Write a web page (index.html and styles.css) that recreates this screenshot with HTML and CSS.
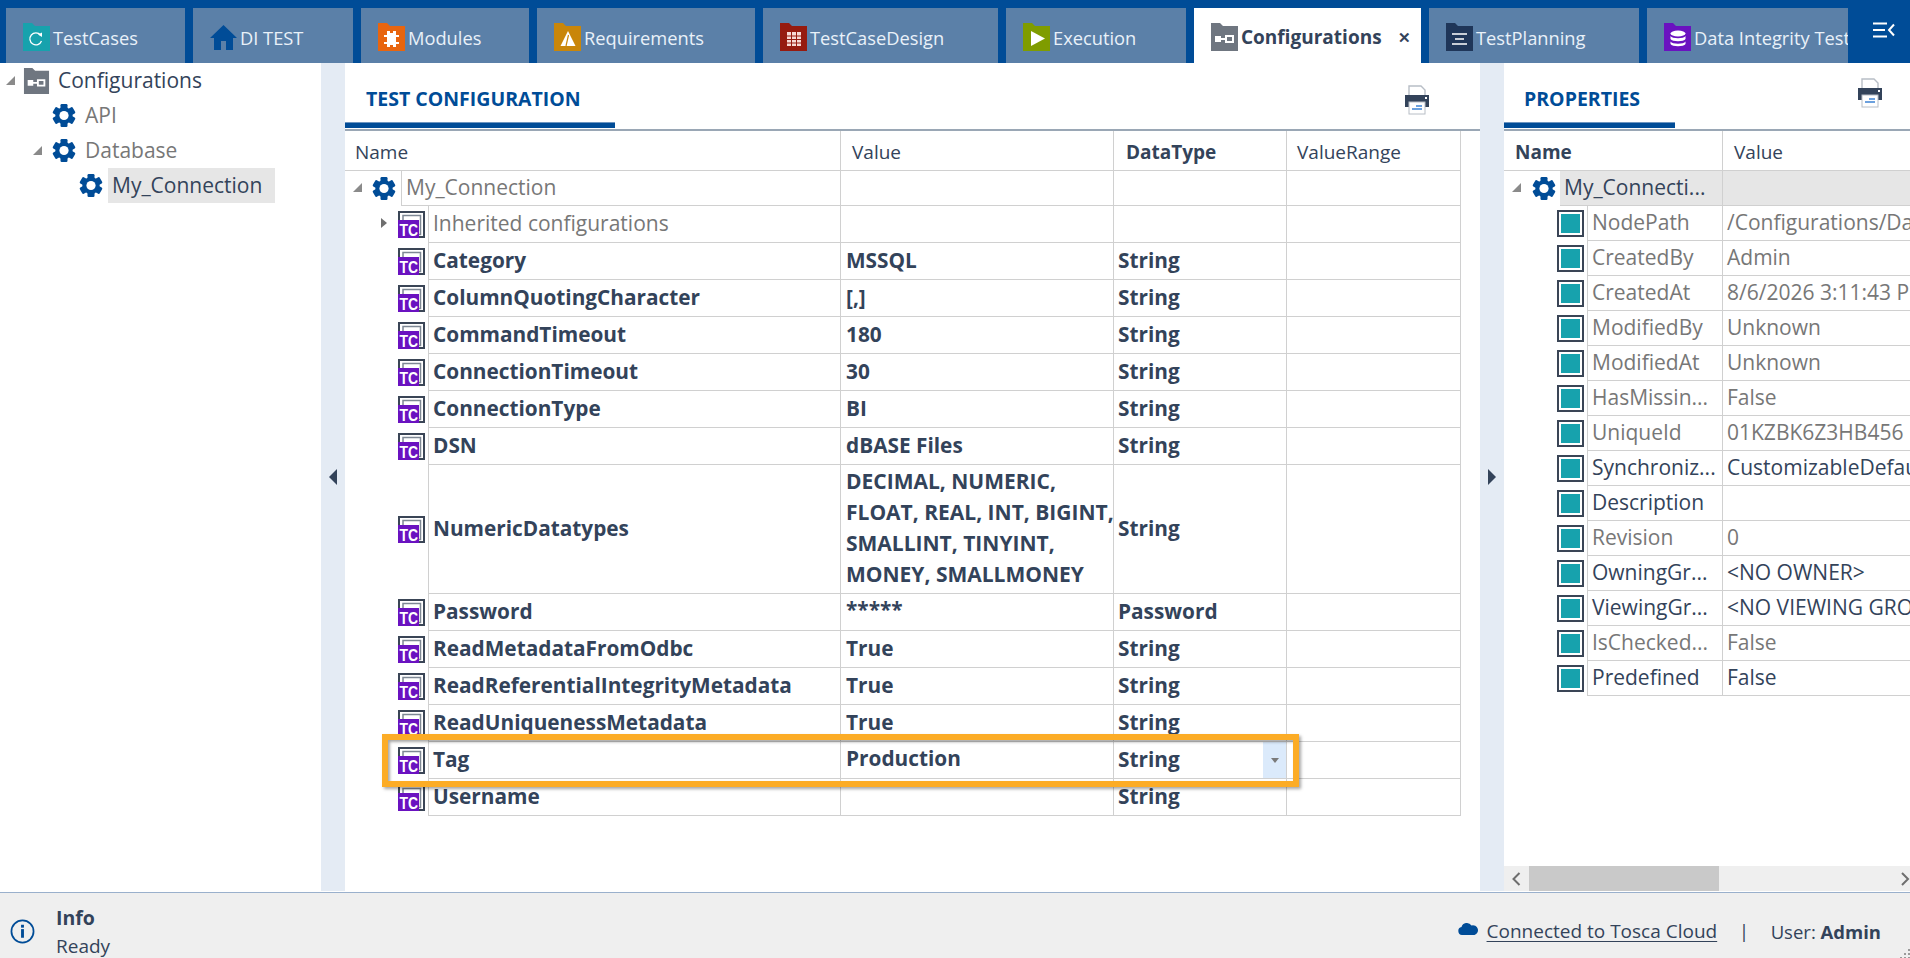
FILE: index.html
```html
<!DOCTYPE html>
<html lang="en">
<head>
<meta charset="utf-8">
<title>Tosca Configurations</title>
<link rel="stylesheet" href="styles.css">
</head>
<body>
<svg class="defs" width="0" height="0" aria-hidden="true">
  <defs>
    <symbol id="gear" viewBox="0 0 24 24">
      <g fill="#004c97">
        <rect x="8.5" y="0.5" width="7" height="23" rx="1.2"/>
        <rect x="8.5" y="0.5" width="7" height="23" rx="1.2" transform="rotate(60 12 12)"/>
        <rect x="8.5" y="0.5" width="7" height="23" rx="1.2" transform="rotate(120 12 12)"/>
        <circle cx="12" cy="12" r="8.6"/>
      </g>
      <circle cx="12" cy="12" r="4.6" fill="#fff"/>
    </symbol>
    <symbol id="tc" viewBox="0 0 27 27">
      <path d="M1 9V1H26V26H21" fill="none" stroke="#3a4556" stroke-width="2"/>
      <path d="M5 9V4.500H22.500V23.500H21" fill="none" stroke="#7d8794" stroke-width="1.500"/>
      <rect x="0" y="9" width="21" height="18" fill="#6a12c0"/>
      <text x="1.500" y="24.500" textLength="18.500" lengthAdjust="spacingAndGlyphs" class="tc-text">TC</text>
    </symbol>
    <symbol id="prop" viewBox="0 0 27 27">
      <rect x="1" y="1" width="25" height="25" fill="#fff" stroke="#3a4556" stroke-width="2"/>
      <rect x="4" y="4" width="19" height="19" fill="#17a2ad"/>
    </symbol>
    <symbol id="folder" viewBox="0 0 27 28">
      <path d="M0 0H9L12 3H27V28H0Z" fill="currentColor"/>
    </symbol>
    <symbol id="print" viewBox="0 0 26 30">
      <path d="M5 10V1H17L21 5V10" fill="#fff" stroke="#b8bec6" stroke-width="1.4"/>
      <path d="M1 10H25V22H1Z" fill="#33435a"/>
      <rect x="21" y="12" width="2" height="2" fill="#fff"/>
      <rect x="5" y="17" width="16" height="12" fill="#fff" stroke="#b8bec6"/>
      <path d="M12 21H18M8 24H18" stroke="#3d83d4" stroke-width="1.6"/>
    </symbol>
  </defs>
</svg>

<header class="topbar">
  <nav class="tabs">
    <div class="tab"><svg class="ti teal"><use href="#folder"/></svg><svg class="glyph" viewBox="0 0 27 28"><path d="M17.500 12A6 6 0 1 0 18.500 18" fill="none" stroke="#fff" stroke-width="1.300"/><path d="M15 11.500L19 9.500V14Z" fill="#fff"/></svg><span>TestCases</span></div>
    <div class="tab"><svg class="ti" viewBox="0 0 27 28"><path d="M13.500 2L0 15H4V27H11V18H16V27H23V15H27Z" fill="#004c97"/></svg><span>DI TEST</span></div>
    <div class="tab"><svg class="ti orange"><use href="#folder"/></svg><svg class="glyph" viewBox="0 0 27 28"><path d="M9 8H12V10H15V8H18V12H21V14H18V19H21V21H18V24H15V22H12V24H9V21H6V19H9V14H6V12H9Z" fill="#fff"/></svg><span>Modules</span></div>
    <div class="tab"><svg class="ti amber"><use href="#folder"/></svg><svg class="glyph" viewBox="0 0 27 28"><path d="M14 8L21.500 23H6.500Z" fill="#fff"/><path d="M14.500 12L12 23" stroke="#c9860a" stroke-width="1.200"/></svg><span>Requirements</span></div>
    <div class="tab"><svg class="ti red"><use href="#folder"/></svg><svg class="glyph" viewBox="0 0 27 28"><path d="M7 9H21V23H7Z" fill="#f6d9d4"/><path d="M7 13H21M7 16.500H21M7 20H21M11.500 9V23M16.500 9V23" stroke="#961b0f"/></svg><span>TestCaseDesign</span></div>
    <div class="tab"><svg class="ti olive"><use href="#folder"/></svg><svg class="glyph" viewBox="0 0 27 28"><path d="M8 8L22 15.500L8 23Z" fill="#fff"/></svg><span>Execution</span></div>
    <div class="tab active"><svg class="ti slate"><use href="#folder"/></svg><svg class="glyph" viewBox="0 0 27 28"><path d="M4 13H10V15H14V12H23V20H14V17H10V19H4Z" fill="#fff"/><rect x="16" y="14" width="5" height="4" fill="#6f7680"/></svg><span>Configurations</span><b class="close">✕</b></div>
    <div class="tab"><svg class="ti navy"><use href="#folder"/></svg><svg class="glyph" viewBox="0 0 27 28"><path d="M6 11H21M9 16H18M6 21H21" stroke="#fff" stroke-width="1.600"/></svg><span>TestPlanning</span></div>
    <div class="tab"><svg class="ti purple"><use href="#folder"/></svg><svg class="glyph" viewBox="0 0 27 28"><ellipse cx="14" cy="10.500" rx="7.500" ry="3" fill="#fff"/><path d="M6.500 13C8 16 20 16 21.500 13V16C20 19 8 19 6.500 16ZM6.500 18.500C8 21.500 20 21.500 21.500 18.500V21C20 24 8 24 6.500 21Z" fill="#fff"/></svg><span>Data Integrity Tests</span></div>
  </nav>
  <svg class="menu-ico" viewBox="0 0 22 16"><path d="M0 1.500H14M0 8H12M0 14.500H14M21 2.500L16 8L21 13.500" fill="none" stroke="#fff" stroke-width="2"/></svg>
</header>

<main class="main">
  <aside class="tree">
    <div class="tnode"><i class="arrow"></i><svg class="ti slate tree-folder"><use href="#folder"/></svg><svg class="glyph tree-glyph" viewBox="0 0 27 28"><path d="M4 13H10V15H14V12H23V20H14V17H10V19H4Z" fill="#fff"/><rect x="16" y="14" width="5" height="4" fill="#6f7680"/></svg><span class="dark">Configurations</span></div>
    <div class="tnode lvl1"><svg class="gear"><use href="#gear"/></svg><span class="grey">API</span></div>
    <div class="tnode lvl1 open"><i class="arrow"></i><svg class="gear"><use href="#gear"/></svg><span class="grey">Database</span></div>
    <div class="tnode lvl2"><svg class="gear"><use href="#gear"/></svg><span class="dark selected">My_Connection</span></div>
  </aside>

  <div class="splitter"><i class="tri tri-left"></i></div>

  <section class="panel center">
    <div class="phead">
      <h2 class="ptitle wide">TEST CONFIGURATION</h2>
      <svg class="print"><use href="#print"/></svg>
    </div>
    <div class="grid">
      <div class="row hdr">
        <div class="c name"><span>Name</span></div>
        <div class="c val"><span>Value</span></div>
        <div class="c dtype"><b>DataType</b></div>
        <div class="c range"><span>ValueRange</span></div>
      </div>
      <div class="row first">
        <div class="lead rootlead"><i class="arrow"></i><svg class="gear"><use href="#gear"/></svg></div>
        <div class="c rootname grey">My_Connection</div>
        <div class="c val"></div><div class="c dtype"></div><div class="c range"></div>
      </div>
      <div class="row">
        <div class="lead"><i class="arrow closed"></i><svg class="tc"><use href="#tc"/></svg></div>
        <div class="c nm grey">Inherited configurations</div>
        <div class="c val"></div><div class="c dtype"></div><div class="c range"></div>
      </div>
      <div class="row strong"><div class="lead"><svg class="tc"><use href="#tc"/></svg></div><div class="c nm">Category</div><div class="c val">MSSQL</div><div class="c dtype">String</div><div class="c range"></div></div>
      <div class="row strong"><div class="lead"><svg class="tc"><use href="#tc"/></svg></div><div class="c nm">ColumnQuotingCharacter</div><div class="c val">[,]</div><div class="c dtype">String</div><div class="c range"></div></div>
      <div class="row strong"><div class="lead"><svg class="tc"><use href="#tc"/></svg></div><div class="c nm">CommandTimeout</div><div class="c val">180</div><div class="c dtype">String</div><div class="c range"></div></div>
      <div class="row strong"><div class="lead"><svg class="tc"><use href="#tc"/></svg></div><div class="c nm">ConnectionTimeout</div><div class="c val">30</div><div class="c dtype">String</div><div class="c range"></div></div>
      <div class="row strong"><div class="lead"><svg class="tc"><use href="#tc"/></svg></div><div class="c nm">ConnectionType</div><div class="c val">BI</div><div class="c dtype">String</div><div class="c range"></div></div>
      <div class="row strong"><div class="lead"><svg class="tc"><use href="#tc"/></svg></div><div class="c nm">DSN</div><div class="c val">dBASE Files</div><div class="c dtype">String</div><div class="c range"></div></div>
      <div class="row strong tall"><div class="lead"><svg class="tc"><use href="#tc"/></svg></div><div class="c nm">NumericDatatypes</div><div class="c val"><span class="lines">DECIMAL, NUMERIC,<br>FLOAT, REAL, INT, BIGINT,<br>SMALLINT, TINYINT,<br>MONEY, SMALLMONEY</span></div><div class="c dtype">String</div><div class="c range"></div></div>
      <div class="row strong"><div class="lead"><svg class="tc"><use href="#tc"/></svg></div><div class="c nm">Password</div><div class="c val stars">*****</div><div class="c dtype">Password</div><div class="c range"></div></div>
      <div class="row strong"><div class="lead"><svg class="tc"><use href="#tc"/></svg></div><div class="c nm">ReadMetadataFromOdbc</div><div class="c val">True</div><div class="c dtype">String</div><div class="c range"></div></div>
      <div class="row strong"><div class="lead"><svg class="tc"><use href="#tc"/></svg></div><div class="c nm">ReadReferentialIntegrityMetadata</div><div class="c val">True</div><div class="c dtype">String</div><div class="c range"></div></div>
      <div class="row strong"><div class="lead"><svg class="tc"><use href="#tc"/></svg></div><div class="c nm">ReadUniquenessMetadata</div><div class="c val">True</div><div class="c dtype">String</div><div class="c range"></div></div>
      <div class="row strong"><div class="lead"><svg class="tc"><use href="#tc"/></svg></div><div class="c nm">Tag</div><div class="c val raised">Production</div><div class="c dtype">String<span class="dd"><i></i></span></div><div class="c range"></div></div>
      <div class="row strong"><div class="lead"><svg class="tc"><use href="#tc"/></svg></div><div class="c nm">Username</div><div class="c val"></div><div class="c dtype">String</div><div class="c range"></div></div>
    </div>
    <div class="callout"></div>
  </section>

  <div class="splitter"><i class="tri tri-right"></i></div>

  <section class="panel props">
    <div class="phead">
      <h2 class="ptitle narrow">PROPERTIES</h2>
      <svg class="print print-up"><use href="#print"/></svg>
    </div>
    <div class="pgrid">
      <div class="prow phdr"><div class="pc pname"><b>Name</b></div><div class="pc pval">Value</div></div>
      <div class="prow proot"><div class="plead rootp"><i class="arrow"></i><svg class="gear"><use href="#gear"/></svg></div><div class="pc rootc">My_Connecti...</div><div class="pc pval shade"></div></div>
      <div class="prow"><div class="plead"><svg class="tc"><use href="#prop"/></svg></div><div class="pc pn grey">NodePath</div><div class="pc pval grey">/Configurations/Database/My_Connection</div></div>
      <div class="prow"><div class="plead"><svg class="tc"><use href="#prop"/></svg></div><div class="pc pn grey">CreatedBy</div><div class="pc pval grey">Admin</div></div>
      <div class="prow"><div class="plead"><svg class="tc"><use href="#prop"/></svg></div><div class="pc pn grey">CreatedAt</div><div class="pc pval grey">8/6/2026 3:11:43 PM</div></div>
      <div class="prow"><div class="plead"><svg class="tc"><use href="#prop"/></svg></div><div class="pc pn grey">ModifiedBy</div><div class="pc pval grey">Unknown</div></div>
      <div class="prow"><div class="plead"><svg class="tc"><use href="#prop"/></svg></div><div class="pc pn grey">ModifiedAt</div><div class="pc pval grey">Unknown</div></div>
      <div class="prow"><div class="plead"><svg class="tc"><use href="#prop"/></svg></div><div class="pc pn grey">HasMissin...</div><div class="pc pval grey">False</div></div>
      <div class="prow"><div class="plead"><svg class="tc"><use href="#prop"/></svg></div><div class="pc pn grey">UniqueId</div><div class="pc pval grey">01KZBK6Z3HB456</div></div>
      <div class="prow"><div class="plead"><svg class="tc"><use href="#prop"/></svg></div><div class="pc pn dark">Synchroniz...</div><div class="pc pval dark">CustomizableDefault</div></div>
      <div class="prow"><div class="plead"><svg class="tc"><use href="#prop"/></svg></div><div class="pc pn dark">Description</div><div class="pc pval"></div></div>
      <div class="prow"><div class="plead"><svg class="tc"><use href="#prop"/></svg></div><div class="pc pn grey">Revision</div><div class="pc pval grey">0</div></div>
      <div class="prow"><div class="plead"><svg class="tc"><use href="#prop"/></svg></div><div class="pc pn dark">OwningGr...</div><div class="pc pval dark">&lt;NO OWNER&gt;</div></div>
      <div class="prow"><div class="plead"><svg class="tc"><use href="#prop"/></svg></div><div class="pc pn dark">ViewingGr...</div><div class="pc pval dark">&lt;NO VIEWING GROUP&gt;</div></div>
      <div class="prow"><div class="plead"><svg class="tc"><use href="#prop"/></svg></div><div class="pc pn grey">IsChecked...</div><div class="pc pval grey">False</div></div>
      <div class="prow"><div class="plead"><svg class="tc"><use href="#prop"/></svg></div><div class="pc pn dark">Predefined</div><div class="pc pval dark">False</div></div>
    </div>
    <div class="hscroll">
      <svg class="sarrow" viewBox="0 0 10 14"><path d="M8 1L2 7L8 13" fill="none" stroke="#6e6e6e" stroke-width="2"/></svg>
      <div class="thumb"></div>
      <svg class="sarrow sarrow-r" viewBox="0 0 10 14"><path d="M2 1L8 7L2 13" fill="none" stroke="#6e6e6e" stroke-width="2"/></svg>
    </div>
  </section>
</main>

<footer class="status">
  <svg class="info-ico" viewBox="0 0 26 26"><circle cx="13" cy="13" r="11.500" fill="none" stroke="#004c97" stroke-width="1.800"/><rect x="11.500" y="10.500" width="3" height="9" fill="#004c97"/><rect x="11.500" y="6" width="3" height="3" fill="#004c97"/></svg>
  <div class="msg"><b>Info</b><span>Ready</span></div>
  <div class="conn">
    <svg class="cloud" viewBox="0 0 20 13"><path d="M4 13A4 4 0 0 1 3.500 5.100A5.500 5.500 0 0 1 13.500 3.500A4.800 4.800 0 0 1 16.500 13Z" fill="#004c97"/></svg>
    <a class="link">Connected to Tosca Cloud</a>
    <span class="sep">|</span>
    <span class="user">User: <b>Admin</b></span>
  </div>
  <svg class="grip" viewBox="0 0 10 10"><path d="M8 1h2v2H8zM4 5h2v2H4zM8 5h2v2H8zM0 9h2v1H0zM4 9h2v1H4zM8 9h2v1H8z" fill="#9a9a9a"/></svg>
</footer>
</body>
</html>
```

FILE: styles.css
```css
* { box-sizing: border-box; }
html, body { margin: 0; padding: 0; }
body {
  width: 1910px; height: 958px; overflow: hidden; display: flex; flex-direction: column;
  background: #fff; color: #33435a;
  font-family: "Open Sans", "Noto Sans", sans-serif; font-size: 21px;
}
.defs { position: absolute; }
.tc-text { font: bold 17px "Liberation Sans", sans-serif; fill: #fff; }

.dark { color: #33435a; }
.grey { color: #777; }

/* Top tabs */
.topbar { height: 63px; flex: none; background: #004c97; display: flex; padding: 8px 0 0 6px; position: relative; }
.tabs {
  width: 1842px; overflow: hidden; display: grid; gap: 8px;
  grid-template-columns: 179px 160px 168px 218px 235px 180px 227px 210px 201px;
}
.tab {
  background: #5b80a8; color: #e9f1f9; display: flex; align-items: center; padding: 3px 0 0 17px;
  position: relative; white-space: nowrap; overflow: hidden; font-size: 18.3px;
}
.tab.active { background: #fff; color: #33435a; font-weight: 700; font-size: 19px; padding-top: 3px; }
.tab span { margin-left: 3px; }
.ti { width: 27px; height: 28px; flex: none; }
.glyph { width: 27px; height: 28px; flex: none; margin-left: -27px; }
.teal { color: #17a2ad; } .orange { color: #e8650f; } .amber { color: #c9860a; }
.red { color: #961b0f; } .olive { color: #7f9c00; } .slate { color: #6f7680; }
.navy { color: #1f3659; } .purple { color: #6a12c0; }
.close { margin-left: auto; margin-right: 10px; font-size: 15px; color: #33435a; }
.menu-ico { width: 22px; height: 16px; margin: 14px 0 0 25px; }

/* Main */
.main { flex: none; height: 829px; display: flex; padding-bottom: 1px; }
.tree { width: 321px; flex: none; }
.tnode { height: 35px; display: flex; align-items: center; padding-left: 6px; position: relative; white-space: nowrap; }
.tnode .tree-folder { margin-left: 8px; }
.tnode > span { margin-left: 8px; padding-bottom: 2px; }
.tree-folder { width: 27px; height: 26px; }
.tree-glyph { height: 26px; }
.lvl1 { padding-left: 52px; }
.lvl1.open { padding-left: 33px; }
.lvl1.open .gear { margin-left: 10px; }
.lvl1 > span { margin-left: 9px; }
.lvl2 { padding-left: 79px; }
.lvl2 > span { margin-left: 5px; }
.selected { background: #e6e6e6; height: 35px; width: 167px; padding-left: 4px; line-height: 35px; }
.gear { width: 24px; height: 25px; flex: none; }
.arrow { width: 0; height: 0; flex: none; display: block; border-style: solid; border-width: 0 0 9px 9px; border-color: transparent transparent #8a8a8a transparent; }
.arrow.closed { border-width: 5px 0 5px 6px; border-color: transparent transparent transparent #6f6f6f; }

.splitter { width: 24px; flex: none; background: #e4ebf4; display: flex; align-items: center; padding-left: 8px; }
.tri { display: block; width: 0; height: 0; border-style: solid; margin-bottom: 1px; }
.tri-left { border-width: 8px 8px 8px 0; border-color: transparent #33435a transparent transparent; }
.tri-right { border-width: 8px 0 8px 8px; border-color: transparent transparent transparent #33435a; }

.panel { display: flex; flex-direction: column; position: relative; overflow: hidden; }
.center { width: 1135px; flex: none; }
.props { width: 406px; flex: none; }
.phead { height: 68px; flex: none; display: flex; justify-content: space-between; border-bottom: 2px solid #9aa7b5; }
.ptitle {
  margin: 0; height: 65px; padding: 22px 0 0 21px; font-size: 19.5px; font-weight: 700; color: #004c97;
  border-bottom: 5px solid #004c97; box-shadow: inset 0 -1px 0 #6e95c0; white-space: nowrap;
}
.wide { width: 270px; }
.narrow { width: 171px; padding-left: 20px; }
.print { width: 26px; height: 30px; margin: 22px 50px 0 0; }
.print-up { margin: 15px 27px 0 0; }

/* Center grid */
.grid { flex: none; width: 1116px; }
.row { display: flex; height: 37px; }
.row.hdr { height: 40px; border-bottom: 1px solid #d0d0d0; font-size: 19px; }
.row.hdr .c { border-bottom: 0; padding: 2px 0 0 11px; }
.row.hdr .name { width: 496px; padding-left: 10px; }
.row.hdr .dtype { padding-left: 12px; }
.row.hdr .range { padding-left: 10px; }
.row.first { height: 35px; }
.row.tall { height: 129px; }
.c {
  border-right: 1px solid #d0d0d0; border-bottom: 1px solid #d0d0d0; display: flex; align-items: center;
  white-space: nowrap; min-width: 0; padding: 0 0 2px 5px;
}
.lead { width: 83px; flex: none; display: flex; align-items: center; justify-content: flex-end; padding-right: 3px; position: relative; }
.lead .arrow { position: absolute; }
.lead .arrow { left: 8px; top: 12px; }
.lead .arrow.closed { left: 36px; top: 12px; }
.rootlead { width: 56px; padding-right: 5px; }
.rootlead .arrow { left: 8px; }
.tc { width: 27px; height: 27px; flex: none; }
.nm { width: 413px; flex: none; border-left: 1px solid #d0d0d0; padding-left: 4px; }
.rootname { width: 440px; flex: none; border-left: 1px solid #d0d0d0; padding-left: 4px; }
.val { width: 273px; flex: none; }
.dtype { width: 173px; flex: none; padding-left: 4px; }
.range { width: 174px; flex: none; }
.strong { font-weight: 700; font-size: 20.8px; }
.lines { line-height: 31px; font-size: 21px; white-space: nowrap; }
.stars { align-items: flex-start; padding-top: 2px; line-height: 26px; }
.raised { padding-bottom: 4px; }
.dd { margin-left: auto; width: 23px; align-self: stretch; margin-bottom: -2px; background: #dbeafb; display: flex; align-items: center; justify-content: center; }
.dd i { width: 0; height: 0; border-style: solid; border-width: 5px 4.500px 0 4.500px; border-color: #7a7a7a transparent transparent transparent; }

.callout {
  position: absolute; left: 37px; top: 671px; width: 917px; height: 53px;
  border: 6px solid #fcac26;
  box-shadow: 2px 2px 3px rgba(0,0,0,.35), inset 2px 2px 3px rgba(0,0,0,.35);
}

/* Properties grid */
.pgrid { flex: 1; min-height: 0; }
.prow { display: flex; height: 35px; white-space: nowrap; }
.phdr { height: 40px; border-bottom: 1px solid #d0d0d0; font-size: 19px; }
.phdr .pc { border-bottom: 0; padding: 2px 0 0 11px; }
.pc { display: flex; align-items: center; border-bottom: 1px solid #d0d0d0; padding: 0 0 2px 4px; overflow: hidden; }
.pname { width: 219px; flex: none; border-right: 1px solid #d0d0d0; }
.pval { flex: 1; min-width: 0; }
.plead { width: 83px; flex: none; display: flex; align-items: center; justify-content: flex-end; padding-right: 3px; position: relative; }
.plead .arrow { position: absolute; left: 8px; top: 12px; }
.rootp { width: 56px; padding-right: 4px; }
.pn { width: 136px; flex: none; border-left: 1px solid #d0d0d0; border-right: 1px solid #d0d0d0; }
.rootc { width: 163px; flex: none; background: #e6e6e6; border-right: 1px solid #d0d0d0; }
.shade { background: #e6e6e6; }
.hscroll { height: 25px; flex: none; background: #efefef; display: flex; align-items: center; position: relative; }
.thumb { width: 190px; height: 25px; background: #c9c9c9; }
.sarrow { width: 25px; height: 14px; flex: none; }
.sarrow-r { margin-left: auto; width: 10px; margin-right: 0; }

/* Status */
.status { flex: none; height: 66px; background: #efefef; border-top: 1px solid #9ab0cc; display: flex; position: relative; font-size: 19px; }
.info-ico { width: 25px; height: 25px; margin: 26px 0 0 10px; flex: none; }
.msg { margin-left: 21px; display: flex; flex-direction: column; padding-top: 11px; line-height: 28px; }
.msg b { font-weight: 700; font-size: 19.5px; }
.conn { margin-left: auto; display: flex; align-items: center; padding: 10px 29px 0 0; height: 66px; white-space: nowrap; }
.cloud { width: 20px; height: 13px; margin: -6px 9px 0 0; }
.link { text-decoration: underline; text-underline-offset: 3px; }
.sep { margin: 0 21.5px; }
.user { font-size: 18.5px; }
.grip { position: absolute; right: 0; bottom: 0; width: 10px; height: 10px; }
```
